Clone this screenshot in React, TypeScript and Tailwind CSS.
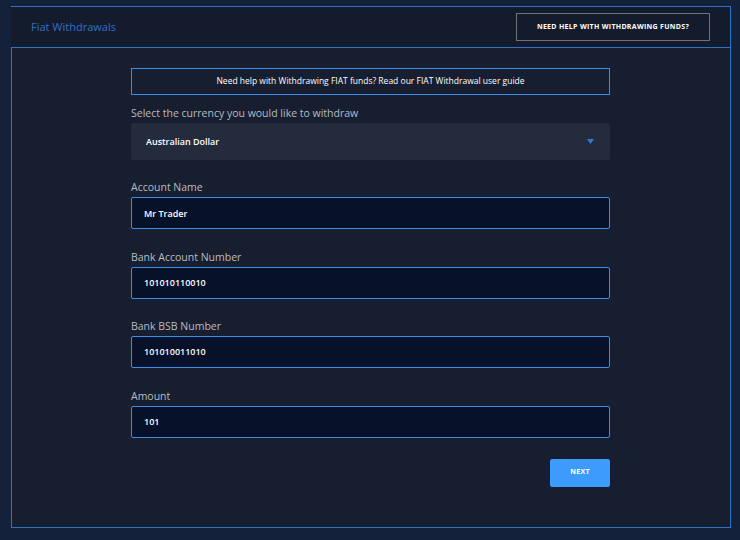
const font = { fontFamily: '"Open Sans", "Liberation Sans", sans-serif' };

const fields = [
  { label: 'Account Name', value: 'Mr Trader' },
  { label: 'Bank Account Number', value: '101010110010' },
  { label: 'Bank BSB Number', value: '101010011010' },
  { label: 'Amount', value: '101' },
];

export default function App() {
  return (
    <div className="w-[740px] h-[540px] bg-[#14213a] pt-[6px] pl-[11px]" style={font}>
      <div className="w-[720px] border-t border-r border-b border-[#2d74c9]">
        <div className="h-[41px] bg-[#141b2d] border-b border-[#2d74c9] flex items-center justify-between pl-[20px] pr-[20px]">
          <span className="text-[11px] text-[#2f6fc9]">Fiat Withdrawals</span>
          <button className="w-[194px] h-[28px] border border-[#6f7378] text-white text-[7px] font-bold tracking-[0.3px] uppercase">
            Need help with withdrawing funds?
          </button>
        </div>

        <div className="bg-[#161e2f] border-l border-[#2d74c9] pt-[20px] pb-[40px] pl-[119px]">
          <div className="w-[479px] flex flex-col">
            <div className="h-[27px] border border-[#3a8ee8] flex items-center justify-center text-white text-[8.5px]">
              Need help with Withdrawing FIAT funds? Read our FIAT Withdrawal user guide
            </div>

            <label className="mt-[11px] text-[10.5px] leading-[15px] text-[#b8bcc4] mb-[2px]">
              Select the currency you would like to withdraw
            </label>
            <div className="h-[37px] bg-[#232b3c] rounded-[2px] flex items-center justify-between pl-[15px] pr-[16px]">
              <span className="text-white text-[9px] font-semibold">Australian Dollar</span>
              <svg width="7" height="5" viewBox="0 0 7 5">
                <path d="M0 0 H7 L3.5 5 Z" fill="#3478d0" />
              </svg>
            </div>

            {fields.map((f) => (
              <div key={f.label} className="mt-[20.4px] flex flex-col">
                <label className="text-[10.5px] leading-[15px] text-[#b8bcc4] mb-[2px]">{f.label}</label>
                <div className="h-[32px] bg-[#07112a] border border-[#3b8ee6] rounded-[2px] flex items-center pl-[12px] text-white text-[9px] font-semibold">
                  {f.value}
                </div>
              </div>
            ))}

            <div className="flex justify-end mt-[21px]">
              <button className="w-[60px] h-[28px] bg-[#3d9bfe] rounded-[2px] text-white text-[7px] font-bold tracking-[0.3px]">
                NEXT
              </button>
            </div>
          </div>
        </div>
      </div>
    </div>
  );
}
